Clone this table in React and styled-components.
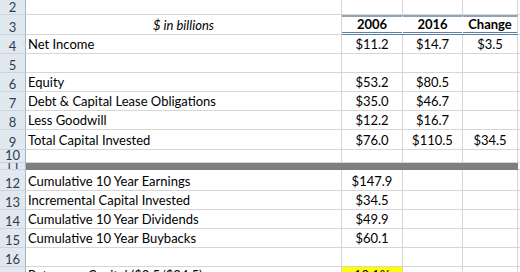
import React from "react";
import styled, { createGlobalStyle, css } from "styled-components";

const GlobalStyle = createGlobalStyle`
  html, body { margin: 0; padding: 0; background: #ffffff; }
  body { width: 520px; height: 272px; overflow: hidden; }
`;

const Sheet = styled.div`
  width: 520px;
  height: 272px;
  overflow: hidden;
  display: flex;
  flex-direction: column;
  font-family: Lato, "Open Sans", sans-serif;
  font-size: 13px;
  color: #000;
  background: #fff;
`;

const Row = styled.div`
  display: grid;
  grid-template-columns: 26px 316px 61px 60px 55px 1fr;
  height: ${(p) => p.$h}px;
  flex: none;
`;

const Cell = styled.div`
  box-sizing: border-box;
  display: flex;
  align-items: flex-end;
  justify-content: ${(p) => (p.$align === "left" ? "flex-start" : "center")};
  padding: 0 2px 1px;
  border-right: 1px solid ${(p) => (p.$noRight ? "transparent" : "#d6d6d6")};
  border-bottom: 1px solid #d6d6d6;
  white-space: nowrap;
  overflow: hidden;
  line-height: 15px;
  font-weight: ${(p) => (p.$bold ? 700 : 400)};
  font-style: ${(p) => (p.$italic ? "italic" : "normal")};
  background: ${(p) => p.$bg || "transparent"};
  ${(p) =>
    p.$head &&
    css`
      border-top: 2px solid #8ea2ba;
      border-bottom: 3px double #5d7ea6;
      padding-bottom: 0;
    `}
  ${(p) =>
    p.$bar &&
    css`
      background: #7f7f7f;
      border-right: none;
      border-bottom: none;
    `}
`;

const RowHead = styled.div`
  box-sizing: border-box;
  display: flex;
  align-items: flex-end;
  justify-content: center;
  padding-bottom: 1px;
  background: #e2e8f0;
  border-right: 1px solid #9eb6ce;
  border-bottom: 1px solid #c9d4e0;
  color: #2d3d4f;
  font-size: 13px;
  line-height: 12px;
  overflow: hidden;
  ${(p) =>
    p.$clip &&
    css`
      line-height: 8px;
      padding-bottom: 0;
    `}
`;

const rows = [
  { n: 2, h: 15 },
  { n: 3, h: 20, label: "$ in billions", italic: true, header: ["2006", "2016", "Change"] },
  { n: 4, h: 19, label: "Net Income", vals: ["$11.2", "$14.7", "$3.5"] },
  { n: 5, h: 19 },
  { n: 6, h: 19, label: "Equity", vals: ["$53.2", "$80.5", ""] },
  { n: 7, h: 19, label: "Debt & Capital Lease Obligations", vals: ["$35.0", "$46.7", ""] },
  { n: 8, h: 19, label: "Less Goodwill", vals: ["$12.2", "$16.7", ""] },
  { n: 9, h: 20, label: "Total Capital Invested", vals: ["$76.0", "$110.5", "$34.5"] },
  { n: 10, h: 13 },
  { n: 11, h: 7, bar: true },
  { n: 12, h: 21, label: "Cumulative 10 Year Earnings", vals: ["$147.9", "", ""] },
  { n: 13, h: 19, label: "Incremental Capital Invested", vals: ["$34.5", "", ""] },
  { n: 14, h: 19, label: "Cumulative 10 Year Dividends", vals: ["$49.9", "", ""] },
  { n: 15, h: 19, label: "Cumulative 10 Year Buybacks", vals: ["$60.1", "", ""] },
  { n: 16, h: 19 },
  { n: 17, h: 18, label: "Return on Capital ($3.5/$34.5)", vals: ["10.1%", "", ""], highlight: true },
];

export default function App() {
  return (
    <>
      <GlobalStyle />
      <Sheet>
        {rows.map((r) => (
          <Row key={r.n} $h={r.h}>
            <RowHead $clip={r.bar}>{r.n}</RowHead>
            {r.bar ? (
              <>
                <Cell $bar />
                <Cell $bar />
                <Cell $bar />
                <Cell $bar $noRight />
                <Cell />
              </>
            ) : (
              <>
                <Cell $align={r.italic ? "center" : "left"} $italic={r.italic}>
                  {r.label}
                </Cell>
                {r.header
                  ? r.header.map((h, i) => (
                      <Cell key={i} $head $bold $noRight={i < 2}>
                        {h}
                      </Cell>
                    ))
                  : [0, 1, 2].map((i) => (
                      <Cell key={i} $bg={r.highlight && i === 0 ? "#ffff00" : undefined}>
                        {r.vals ? r.vals[i] : ""}
                      </Cell>
                    ))}
                <Cell />
              </>
            )}
          </Row>
        ))}
      </Sheet>
    </>
  );
}
